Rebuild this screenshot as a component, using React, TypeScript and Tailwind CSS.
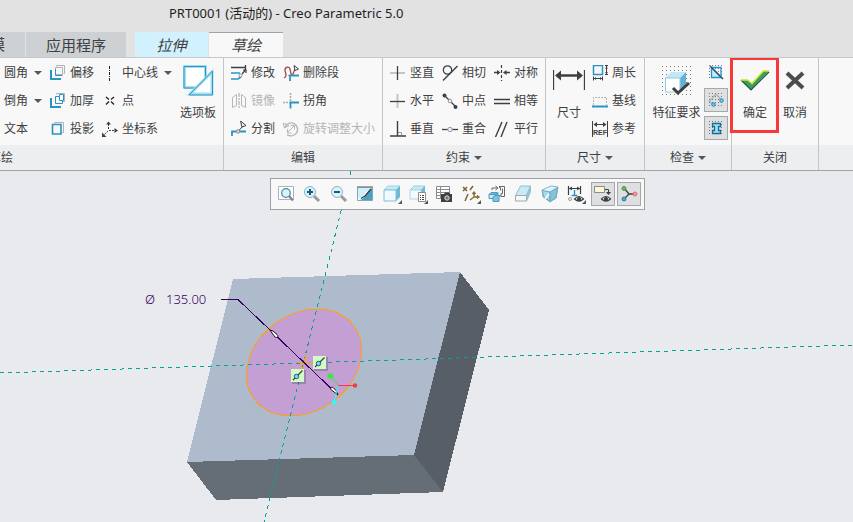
import type { ReactNode } from 'react'
import clsx from 'clsx'

const BLUE = '#2b93c3'
const INK = '#3d3f42'
const GRAY = '#b4b6b8'

type IconProps = { children: ReactNode; size?: number }

function Icon({ children, size = 16 }: IconProps) {
  return (
    <svg
      width={size}
      height={size}
      viewBox={`0 0 ${size} ${size}`}
      fill="none"
      stroke={INK}
      className="block shrink-0"
      aria-hidden="true"
    >
      {children}
    </svg>
  )
}

const icons = {
  offset: (
    <Icon>
      <path d="M5.5 2.500V9.500h7V2.500zM6.500 1.500V.500h8v8h-1" stroke="#b0b2b4" />
      <path d="M5.500 4v6.500h7" stroke={BLUE} />
      <path d="M1 5v9h10" stroke={BLUE} strokeWidth="2" />
    </Icon>
  ),
  thicken: (
    <Icon>
      <path d="M6.500 1.500v-1h8v8h-2" stroke="#b0b2b4" />
      <path d="M5.500 3.500v7h7v-3M5.500 3.500h4v4h4v-6h-4v2" stroke={BLUE} />
      <path d="M1 5v9h10" stroke={BLUE} strokeWidth="2" />
    </Icon>
  ),
  project: (
    <Icon>
      <path d="M4.5 2.500v-1h9v10h-1.500" stroke="#b0b2b4" />
      <path d="M2.500 3.500h8.500v9.500H2.500z" stroke={BLUE} strokeWidth="1.600" />
    </Icon>
  ),
  centerline: (
    <Icon>
      <path d="M7.500 1v15" stroke="#222" strokeDasharray="3 1 1 1" shapeRendering="crispEdges" />
    </Icon>
  ),
  point: (
    <Icon>
      <path d="M4 4l3 2.500M9 8.500l3 3M12 4L9 6.500M7 8.500l-3 3" stroke="#222" strokeWidth="1.300" />
    </Icon>
  ),
  csys: (
    <Icon>
      <path d="M6.500 3v6M7 9.500h6M6 10l-4 4" strokeDasharray="2 1" />
      <path d="M4 3.500L6.500.500 9 3.500zM12.500 7L16 9.500 12.500 12zM0 16v-4.500L4.500 16z" fill={INK} stroke="none" />
    </Icon>
  ),
  modify: (
    <Icon>
      <path d="M0 2.500h14M14.500 0v5" strokeWidth="1.300" />
      <path d="M0 8h9M0 14h7l3-2" stroke={BLUE} strokeWidth="1.700" />
      <path d="M11 9l3-3.500M12 5h3v3" strokeWidth="1.200" />
      <circle cx="9.500" cy="10.500" r="1.500" stroke="#888" fill="#fff" />
    </Icon>
  ),
  mirror: (
    <Icon>
      <path d="M1.500 4.500l4-3v11l-4 2zM14.500 4.500l-4-3v11l4 2z" stroke={GRAY} />
      <path d="M8 0v16" stroke={GRAY} strokeWidth="1.300" strokeDasharray="4 1 2 1" />
    </Icon>
  ),
  split: (
    <Icon>
      <path d="M1 15v-4.500h14" stroke={BLUE} strokeWidth="1.800" />
      <path d="M9.500 0l5.500 4.500-4 1.500zM11.500 5.500L7 10.500" />
      <circle cx="7" cy="10.500" r="1.700" fill="#ddd" stroke="#888" />
    </Icon>
  ),
  deleteSegment: (
    <Icon>
      <path d="M1 13c4-2 1-5 1-8s4-4 5-1 0 6 3 5l2-5" stroke="#a6464a" strokeWidth="1.300" />
      <path d="M11 .500L15.500 4 12 5.500z" fill="#fff" />
      <path d="M7 16v-5.500h9" stroke={BLUE} strokeWidth="1.800" />
      <path d="M2 10.500h4" strokeDasharray="2 1" stroke="#999" />
    </Icon>
  ),
  corner: (
    <Icon>
      <path d="M7.500 0v9M0 9.500h7" stroke="#a9abad" strokeWidth="1.500" strokeDasharray="2 1" />
      <path d="M7.500 15.500v-6H16" stroke={BLUE} strokeWidth="1.800" />
    </Icon>
  ),
  rotateResize: (
    <Icon>
      <path d="M4 13.500A6.500 6.500 0 1 0 2 6" stroke={GRAY} strokeWidth="1.400" />
      <path d="M0 2l1.500 5L6 4.500zM5 11l6-6M7.500 4.500h4v4M4.500 8v4h4" stroke={GRAY} />
    </Icon>
  ),
  vertical: (
    <Icon>
      <path d="M0 8h15" stroke="#c3c5c7" strokeWidth="2" />
      <path d="M7.500 1v14" strokeWidth="1.300" />
    </Icon>
  ),
  horizontal: (
    <Icon>
      <path d="M7.500 1v14" stroke="#c3c5c7" strokeWidth="2" />
      <path d="M0 8.500h15" strokeWidth="1.300" />
    </Icon>
  ),
  perpendicular: (
    <Icon>
      <path d="M8 11.500h3.500v3" stroke="#9a9c9e" />
      <path d="M7.500 0v15M0 15h16" strokeWidth="1.400" />
    </Icon>
  ),
  tangent: (
    <Icon>
      <circle cx="5.500" cy="5" r="4.200" strokeWidth="1.200" />
      <path d="M1 15.500L15.500 1" strokeWidth="1.400" />
    </Icon>
  ),
  midpoint: (
    <Icon>
      <path d="M2 2l12 12" strokeWidth="1.300" />
      <circle cx="2.500" cy="2.500" r="2" fill={INK} stroke="none" />
      <circle cx="13.500" cy="14" r="2" fill={INK} stroke="none" />
      <circle cx="8" cy="8" r="1.800" fill="#eee" stroke="#999" />
    </Icon>
  ),
  coincident: (
    <Icon>
      <path d="M0 8.500h16" strokeWidth="1.300" />
      <circle cx="8" cy="8.500" r="2.200" fill="#eee" stroke="#999" />
    </Icon>
  ),
  symmetric: (
    <Icon>
      <path d="M7.500 0v16" strokeDasharray="3 2" strokeWidth="1.200" />
      <path d="M0 7.500h4M11 7.500h5" strokeWidth="1.300" />
      <path d="M3 5l3.500 2.500L3 10zM12.500 5L9 7.500l3.500 2.500z" fill={INK} stroke="none" />
    </Icon>
  ),
  equal: (
    <Icon>
      <path d="M0 6.500h16M0 10.500h16" strokeWidth="1.500" />
    </Icon>
  ),
  parallel: (
    <Icon>
      <path d="M1.500 16L8 1M7 16l6-15" strokeWidth="1.400" />
    </Icon>
  ),
  perimeter: (
    <Icon>
      <path d="M1.500.500h9v9h-9z" stroke={BLUE} strokeWidth="1.500" />
      <path d="M14.500 1v8M13 .500h3M13 9.500h3M1 13.500h9M1.500 11.500v4M10.500 11.500v4" />
      <path d="M13 3.500l1.500-2 1.500 2zM13 7l1.500 2L16 7zM4 12l-2 1.500L4 15zM8 12l2 1.500L8 15z" fill={INK} stroke="none" />
    </Icon>
  ),
  baseline: (
    <Icon>
      <path d="M1.500 12V4.500h13V12" stroke="#b0b2b4" strokeDasharray="2 1" />
      <path d="M0 13.500h16" stroke={BLUE} strokeWidth="2" />
    </Icon>
  ),
  reference: (
    <Icon>
      <path d="M.500 0v16M15.500 0v16M2 3.500h12" />
      <path d="M5 1L1.500 3.500 5 6zM11 1l3.500 2.500L11 6z" fill={INK} stroke="none" />
      <text x="8" y="14" textAnchor="middle" fontSize="7" fontWeight="700" fontFamily="Liberation Sans, sans-serif" fill={INK} stroke="none">
        REF
      </text>
    </Icon>
  ),
}

function Caret() {
  return (
    <svg width="8" height="4" viewBox="0 0 8 4" className="block shrink-0" aria-hidden="true">
      <path d="M0 0h8L4 4z" fill="#55575a" />
    </svg>
  )
}

type ToolProps = { icon?: ReactNode; label: string; caret?: boolean; disabled?: boolean }

function Tool({ icon, label, caret, disabled }: ToolProps) {
  return (
    <button
      type="button"
      disabled={disabled}
      className={clsx(
        'flex h-7 items-center gap-1 whitespace-nowrap leading-4',
        disabled ? 'text-[#b3b5b7]' : 'text-[#3d3f42]',
      )}
    >
      {icon}
      <span>{label}</span>
      {caret && (
        <span className="pl-0.5">
          <Caret />
        </span>
      )}
    </button>
  )
}

function BigTool({ icon, label, className }: { icon: ReactNode; label: string; className?: string }) {
  return (
    <button type="button" className={clsx('flex flex-col items-center gap-2 pt-1.5 leading-4', className)}>
      <span className="flex h-8 items-center">{icon}</span>
      <span className="whitespace-nowrap">{label}</span>
    </button>
  )
}

type GroupProps = { title: ReactNode; caret?: boolean; className: string; children: ReactNode }

function Group({ title, caret, className, children }: GroupProps) {
  return (
    <section className={clsx('flex shrink-0 flex-col border-r border-[#c3c5c7]', className)}>
      <div className="flex h-[87px] items-start pt-px">{children}</div>
      <div className="flex h-[25px] items-center justify-center gap-1 bg-[#eceef0] leading-4">
        {title}
        {caret && <Caret />}
      </div>
    </section>
  )
}

function DotGrid() {
  return (
    <path
      d="M1 1.500h15M1 4.500h15M1 7.500h15M1 10.500h15M1 13.500h15"
      stroke="#77797b"
      strokeDasharray="1 2"
      shapeRendering="crispEdges"
    />
  )
}

function Toggle({ label, pressed, children }: { label: string; pressed?: boolean; children: ReactNode }) {
  return (
    <button
      type="button"
      aria-label={label}
      aria-pressed={!!pressed}
      className={clsx(
        'flex size-6 items-center justify-center border',
        pressed ? 'border-[#a6a8aa] bg-[#dddfe1]' : 'border-transparent',
      )}
    >
      {children}
    </button>
  )
}

function Ribbon() {
  return (
    <div className="flex overflow-hidden border-b border-[#a2a4a6] bg-[#f8f8f8] text-xs text-[#3d3f42]">
      <Group
        className="w-[224px]"
        title={
          <span className="mr-auto flex w-[13px] justify-end overflow-hidden whitespace-nowrap">草绘</span>
        }
      >
        <div className="w-[50px] pl-1">
          <Tool label="圆角" caret />
          <Tool label="倒角" caret />
          <Tool label="文本" />
        </div>
        <div className="w-[52px]">
          <Tool icon={icons.offset} label="偏移" />
          <Tool icon={icons.thicken} label="加厚" />
          <Tool icon={icons.project} label="投影" />
        </div>
        <div className="w-[78px]">
          <Tool icon={icons.centerline} label="中心线" caret />
          <Tool icon={icons.point} label="点" />
          <Tool icon={icons.csys} label="坐标系" />
        </div>
        <BigTool
          label="选项板"
          icon={
            <Icon size={32}>
              <path d="M2.500 1.500h21v21h-21z" stroke="#a5dff2" strokeWidth="3" fill="#fff" />
              <path d="M2 1.500h21.500v21.500H2z" stroke={BLUE} />
              <path d="M30 7v22H8z" fill="#fff" stroke="#a5dff2" strokeWidth="3" />
              <path d="M30.500 6v24H7z" stroke={BLUE} />
            </Icon>
          }
        />
      </Group>

      <Group className="w-[159px]" title="编辑">
        <div className="w-[59px] pl-[7px]">
          <Tool icon={icons.modify} label="修改" />
          <Tool icon={icons.mirror} label="镜像" disabled />
          <Tool icon={icons.split} label="分割" />
        </div>
        <div>
          <Tool icon={icons.deleteSegment} label="删除段" />
          <Tool icon={icons.corner} label="拐角" />
          <Tool icon={icons.rotateResize} label="旋转调整大小" disabled />
        </div>
      </Group>

      <Group className="w-[163px]" title="约束" caret>
        <div className="grid grid-cols-3 gap-x-2 pl-[7px]">
          <Tool icon={icons.vertical} label="竖直" />
          <Tool icon={icons.tangent} label="相切" />
          <Tool icon={icons.symmetric} label="对称" />
          <Tool icon={icons.horizontal} label="水平" />
          <Tool icon={icons.midpoint} label="中点" />
          <Tool icon={icons.equal} label="相等" />
          <Tool icon={icons.perpendicular} label="垂直" />
          <Tool icon={icons.coincident} label="重合" />
          <Tool icon={icons.parallel} label="平行" />
        </div>
      </Group>

      <Group className="w-[99px]" title="尺寸" caret>
        <BigTool
          className="w-[46px]"
          label="尺寸"
          icon={
            <Icon size={32}>
              <path d="M.500 5v20M31.500 5v20" strokeWidth="1.300" />
              <path d="M5 10.500h22" strokeWidth="2.500" />
              <path d="M8 5.500L2 10.500l6 5zM24 5.500l6 5-6 5z" fill={INK} stroke="none" />
            </Icon>
          }
        />
        <div>
          <Tool icon={icons.perimeter} label="周长" />
          <Tool icon={icons.baseline} label="基线" />
          <Tool icon={icons.reference} label="参考" />
        </div>
      </Group>

      <Group className="w-[87px]" title="检查" caret>
        <BigTool
          className="w-[59px] pl-1"
          label="特征要求"
          icon={
            <Icon size={32}>
              <path
                d="M1 1.500h30M1 5.500h30M1 9.500h30M1 13.500h30M1 17.500h30M1 21.500h30M1 25.500h30M1 29.500h30"
                stroke="#77797b"
                strokeDasharray="1 3"
                shapeRendering="crispEdges"
              />
              <path d="M4 13l6-6h15l-6 6z" fill="#bfe9f6" stroke="none" />
              <path d="M19 13l6-6v14l-6 6z" fill="#62b3d3" stroke="none" />
              <path d="M4.500 13h14.500v14H4.500z" fill="#fff" stroke="#8ccbe2" />
              <path d="M12 23l5 5 11-10" strokeWidth="3" />
            </Icon>
          }
        />
        <div className="flex flex-col gap-1 pt-px">
          <Toggle label="着色封闭环">
            <Icon>
              <DotGrid />
              <path d="M4 3.500h9V12" stroke={BLUE} strokeWidth="1.300" />
              <path d="M3.500 3.500v10h10z" fill="#c5ebf7" stroke={BLUE} strokeWidth="1.300" />
              <path d="M2 2l13 13" stroke="#1d5878" strokeWidth="1.400" />
            </Icon>
          </Toggle>
          <Toggle label="突出显示开放端" pressed>
            <Icon>
              <DotGrid />
              <path d="M5 13L1.500 9 8 2l5.500 6" stroke="#b0b2b4" strokeWidth="1.400" />
              <circle cx="5.500" cy="12.500" r="1.800" fill="#5fc7ec" stroke={BLUE} />
              <circle cx="13.500" cy="8.500" r="1.800" fill="#5fc7ec" stroke={BLUE} />
            </Icon>
          </Toggle>
          <Toggle label="重叠几何" pressed>
            <Icon>
              <DotGrid />
              <path d="M4.500 3.500h8v3h-2v4h2v3h-8v-3h2v-4h-2z" fill="#9fe0f5" stroke="#176e94" strokeWidth="1.300" />
            </Icon>
          </Toggle>
        </div>
      </Group>

      <Group className="w-[87px]" title="关闭">
        <div className="relative pl-[7px]">
          <BigTool
            className="w-8"
            label="确定"
            icon={
              <Icon size={32}>
                <path d="M2 15h7l4 4L24 6h6L12 25z" fill="#3a9d68" stroke="none" />
                <path d="M2 15l10 10L30 7" stroke="#24573a" strokeWidth="1.200" />
                <path d="M2 15h6.500l4.500 3.500L24.500 6H30" stroke="#cfe81c" strokeWidth="1.300" />
              </Icon>
            }
          />
          <span className="pointer-events-none absolute -left-0.5 -top-0.5 h-[76px] w-[49px] border-3 border-[#fa3838]" />
        </div>
        <BigTool
          className="ml-2 w-8"
          label="取消"
          icon={
            <Icon size={32}>
              <path d="M8 8l16 15M24 8L8 23" stroke="#4a4c4e" strokeWidth="4" />
            </Icon>
          }
        />
      </Group>

      <div className="flex flex-1 flex-col justify-end">
        <div className="h-[25px] bg-[#eceef0]" />
      </div>
    </div>
  )
}

const cubeTop = '#c6ebf7'
const cubeSide = '#6fb8d6'
const flyout = <path d="M20 16v4h-4z" fill="#55575a" stroke="none" />
const eye = (
  <>
    <path d="M8.500 15q4.500-5 9 0-4.500 4-9 0z" fill="#fff" strokeWidth="1.200" />
    <circle cx="13" cy="14.800" r="1.600" fill={INK} />
  </>
)

const viewTools: { label: string; pressed?: boolean; icon: ReactNode }[] = [
  {
    label: '重新调整',
    icon: (
      <>
        <path d="M2.500 2.500h15v13h-15z" stroke="#b0b2b4" fill="#fff" />
        <path d="M13 12l4 4.500" strokeWidth="2.500" stroke="#888" />
        <circle cx="10" cy="9" r="4.300" fill="#d9f3fb" stroke="#4a86a4" strokeWidth="1.200" />
      </>
    ),
  },
  {
    label: '放大',
    icon: (
      <>
        <path d="M12 12l5 5" strokeWidth="3" stroke="#999b9d" />
        <circle cx="8" cy="8" r="5.500" fill="#d9f3fb" stroke="#8fb3c4" />
        <path d="M5 8h6M8 5v6" stroke="#175c80" strokeWidth="2" />
      </>
    ),
  },
  {
    label: '缩小',
    icon: (
      <>
        <path d="M12 12l5 5" strokeWidth="3" stroke="#999b9d" />
        <circle cx="8" cy="8" r="5.500" fill="#d9f3fb" stroke="#8fb3c4" />
        <path d="M5 8h6" stroke="#175c80" strokeWidth="2" />
      </>
    ),
  },
  {
    label: '重画',
    icon: (
      <>
        <path d="M2.500 3.500h15v13h-15z" fill="#cdeffa" stroke="#7fa9bb" />
        <path d="M5 16C11 14 11 9 17 4v12z" fill="#4ba0c4" stroke="none" />
        <path d="M2 3h16" stroke="#888" strokeWidth="1.500" />
        <path d="M3 15c6 0 6-3 9-8" stroke="#fff" strokeWidth="1.300" />
        <path d="M6 14.500l4-2.500 6-7" strokeWidth="1.300" />
      </>
    ),
  },
  {
    label: '显示样式',
    icon: (
      <>
        <path d="M2 6l4-4h12l-4 4z" fill={cubeTop} stroke="#9cd0e3" />
        <path d="M14 6l4-4v11l-4 4z" fill={cubeSide} stroke="none" />
        <path d="M2 6h12v11H2z" fill="#eefafd" stroke="#7fc0da" />
        {flyout}
      </>
    ),
  },
  {
    label: '已保存方向',
    icon: (
      <>
        <path d="M2 6l4-4h11l-4 4z" fill={cubeTop} stroke="#9cd0e3" />
        <path d="M13 6l4-4v9l-4 4z" fill={cubeSide} stroke="none" />
        <path d="M2 6h11v9H2z" fill="#f2fafd" stroke="#b5d6e3" />
        <path d="M10.500 8.500h7v9h-7z" fill="#fff" stroke="#8a8c8e" />
        <path d="M12 11.500h1M14 11.500h2M12 13.500h1M14 13.500h2M12 15.500h1M14 15.500h2" />
        {flyout}
      </>
    ),
  },
  {
    label: '视图管理器',
    icon: (
      <>
        <path d="M2.500 2.500h13v12h-13zM2.500 5.500h13M2.500 8.500h13M2.500 11.500h13M6.500 2.500v12" stroke="#8a8c8e" fill="#fff" />
        <path d="M7 10h3l1-1.500h4l1 1.500h2v8H7z" fill={INK} stroke="none" />
        <circle cx="13" cy="14" r="2.200" fill="#777" stroke="#ddd" />
      </>
    ),
  },
  {
    label: '基准显示过滤器',
    icon: (
      <>
        <path d="M2 3l4 4M6 3L2 7M12 2L9 6M7 10l-3 7" stroke="#7d6330" strokeWidth="1.500" />
        <path d="M13 8v5h5M13 13l-4 3M11.500 10L13 8l1.500 2M16 11.500l2 1.500-2 1.500" stroke="#8a6a2c" strokeWidth="1.300" />
        {flyout}
      </>
    ),
  },
  {
    label: '透视图',
    icon: (
      <>
        <path d="M5 6V4h5M8.500 2l2.500 2-2.500 2M12 3.500h1.500v3M12 2.500h5.500v10H14v-3h1.500v-5" stroke="#66686a" />
        <path d="M2 10.500l2-2h6l-1 2zM9 10.500l2-2v4l-2 2z" fill={cubeSide} stroke="#4f9dbd" />
        <path d="M2 10.500h7v4H2z" fill={cubeTop} stroke="#4f9dbd" />
        <path d="M6 13l2-1.500h6l-2 1.500v4.500H6z" fill="#7cc3e0" stroke="#4f9dbd" />
      </>
    ),
  },
  {
    label: '剖面',
    icon: (
      <>
        <path d="M2.500 11.500l5-9.500h10l-4 9.500z" fill={cubeTop} stroke="#9bbccb" />
        <path d="M13.500 11.500l4-9.500v6l-4 9z" fill="#8ec9df" stroke="#9bbccb" />
        <path d="M2.500 11.500h11v5.500h-11z" fill="#f4f6f7" stroke="#a6a8aa" />
      </>
    ),
  },
  {
    label: '草绘视图',
    icon: (
      <>
        <path d="M2 6l9-4 7 1-2 11-6 4-7-5z" fill="#dff3fa" stroke="#8db6c7" />
        <path d="M2.500 6.500L10 8v9.500l-6.500-5z" fill="#a9dbec" stroke="#6fa9c0" />
        <path d="M10 8l7.500-4.500L16 14l-6 3.500z" fill="#85c3db" stroke="#6fa9c0" />
        <path d="M5 15l4-5" stroke="#fff" strokeWidth="1.500" />
      </>
    ),
  },
  {
    label: '草绘器显示过滤器',
    icon: (
      <>
        <path d="M2.500 2v9M14.500 2v8M3 4.500h11" strokeWidth="1.200" />
        <path d="M6 2.500L3 4.500l3 2zM11 2.500l3 2-3 2z" fill={INK} stroke="none" />
        <path d="M8.500 6v5M5.500 11.500h6" stroke={BLUE} strokeWidth="1.400" />
        <circle cx="4" cy="15" r="1.500" stroke="#999" />
        {eye}
        {flyout}
      </>
    ),
  },
  {
    label: '注释显示',
    pressed: true,
    icon: (
      <>
        <path d="M1.500 2.500h10v6h-10z" fill="#fdf7d5" stroke="#8a8c8e" />
        <path d="M12 5.500h3.500V8" />
        <path d="M13 8h5l-2.500 3z" fill={INK} stroke="none" />
        {eye}
      </>
    ),
  },
  {
    label: '旋转中心',
    pressed: true,
    icon: (
      <>
        <path d="M5 4l5 6h6M10 10l-5 5" strokeWidth="1.300" />
        <circle cx="5" cy="4.500" r="2" fill="#6bb56a" stroke="#4d944e" />
        <circle cx="16" cy="10" r="2" fill="#f09a9a" stroke="#d96c6c" />
        <circle cx="5" cy="15" r="2" fill="#4aa3cc" stroke="#2d7fa8" />
      </>
    ),
  },
]

function ViewToolbar() {
  return (
    <div
      role="toolbar"
      aria-label="视图"
      className="absolute left-[270px] top-[7px] flex h-8 w-[375px] items-center justify-between border border-[#9fa1a3] bg-[#f8f8f8] px-[3px]"
    >
      {viewTools.map((t) => (
        <Toggle key={t.label} label={t.label} pressed={t.pressed}>
          <Icon size={20}>{t.icon}</Icon>
        </Toggle>
      ))}
    </div>
  )
}

function ConstraintBadge({ x, y }: { x: number; y: number }) {
  return (
    <g transform={`translate(${x} ${y})`}>
      <rect x="1" y="1" width="14" height="14" fill="#000" opacity="0.18" />
      <rect width="13" height="13" fill="#d3fbc6" />
      <path d="M2 11L11.500 1.500" stroke="#3d3f42" strokeWidth="1.300" />
      <circle cx="5.500" cy="7.500" r="2.200" fill="#8fd3e8" stroke="#175c80" />
    </g>
  )
}

// Model space is drawn in window coordinates, so the view box starts under the ribbon.
function Viewport() {
  return (
    <svg
      viewBox="0 171 853 351"
      preserveAspectRatio="xMinYMin slice"
      className="absolute inset-0 h-full w-full"
      fill="none"
      role="img"
      aria-label="PRT0001"
    >
      <g shapeRendering="crispEdges">
        <path d="M233 279l227-7-46 183-227 7z" fill="#aebbcd" />
        <path d="M460 272l29 38-46 182-29-37z" fill="#575e68" />
        <path d="M187 462l227-7 29 37-227 8z" fill="#656d76" />
        <ellipse
          cx="304"
          cy="362.500"
          rx="61.800"
          ry="48.500"
          transform="rotate(-36 304 362.500)"
          fill="#c39fd4"
          stroke="#ffa010"
        />
        <path d="M0 373l853-28M351 171l-87 351" stroke="#0a9f9b" strokeDasharray="4 4" />
        <path d="M296 362.500h17M306 354l-4 18" stroke="#ffa010" />
        <path d="M221 299.500h17L338 395" stroke="#34005c" />
      </g>
      <g fill="#fff" stroke="#111">
        <path d="M270 330l3 1 4 3.500c2 2 0 4-2 2.500l-3-4z" />
        <path d="M338 395l-2-4.500-3-3c-2-1-3 1-1.500 2.500z" />
      </g>
      <ConstraintBadge x={313} y={356} />
      <ConstraintBadge x={291} y={369} />
      <path d="M330 376l8 9" stroke="#2fee3a" />
      <path d="M338 385.500h17" stroke="#f73a3a" />
      <path d="M338 386l-4 16" stroke="#2ff" />
      <circle cx="330.500" cy="376" r="2.800" fill="#2fee3a" />
      <circle cx="355" cy="385.500" r="2.200" fill="#f73a3a" />
      <circle cx="334" cy="402" r="2.200" fill="#2ff" />
      <g fill="#34005c" fontFamily="Noto Sans, sans-serif" fontSize="13" fontWeight="300">
        <text x="145" y="304">Ø</text>
        <text x="166" y="304">135.00</text>
      </g>
    </svg>
  )
}

export default function App() {
  return (
    <div className="flex min-h-screen flex-col bg-[#e8eaee] font-['Noto_Sans','Noto_Sans_CJK_SC',sans-serif]">
      <header className="bg-[#e2e2e2]">
        <h1 className="flex h-7 items-center pl-[169px] text-[13px] text-[#1f1f1f]">
          PRT0001 (活动的) - Creo Parametric 5.0
        </h1>
        <nav className="flex h-[30px] items-end overflow-hidden border-b border-[#c6c8ca] text-[15px] leading-6 text-[#3d3f42]">
          <button type="button" className="flex h-[25px] w-[25px] justify-end overflow-hidden whitespace-nowrap bg-[#cdd1d4] pr-5">
            建模
          </button>
          <button type="button" className="ml-px h-[25px] w-[100px] bg-[#cdd1d4]">
            应用程序
          </button>
          <button type="button" className="ml-[9px] h-[25px] w-[73px] bg-[#d2f1fe] italic">
            拉伸
          </button>
          <button
            type="button"
            aria-current="page"
            className="ml-px h-[25px] w-[74px] border-t border-[#9fa1a3] bg-[#f8f8f8] italic"
          >
            草绘
          </button>
        </nav>
      </header>
      <Ribbon />
      <main className="relative flex-1 overflow-hidden">
        <Viewport />
        <ViewToolbar />
      </main>
    </div>
  )
}
